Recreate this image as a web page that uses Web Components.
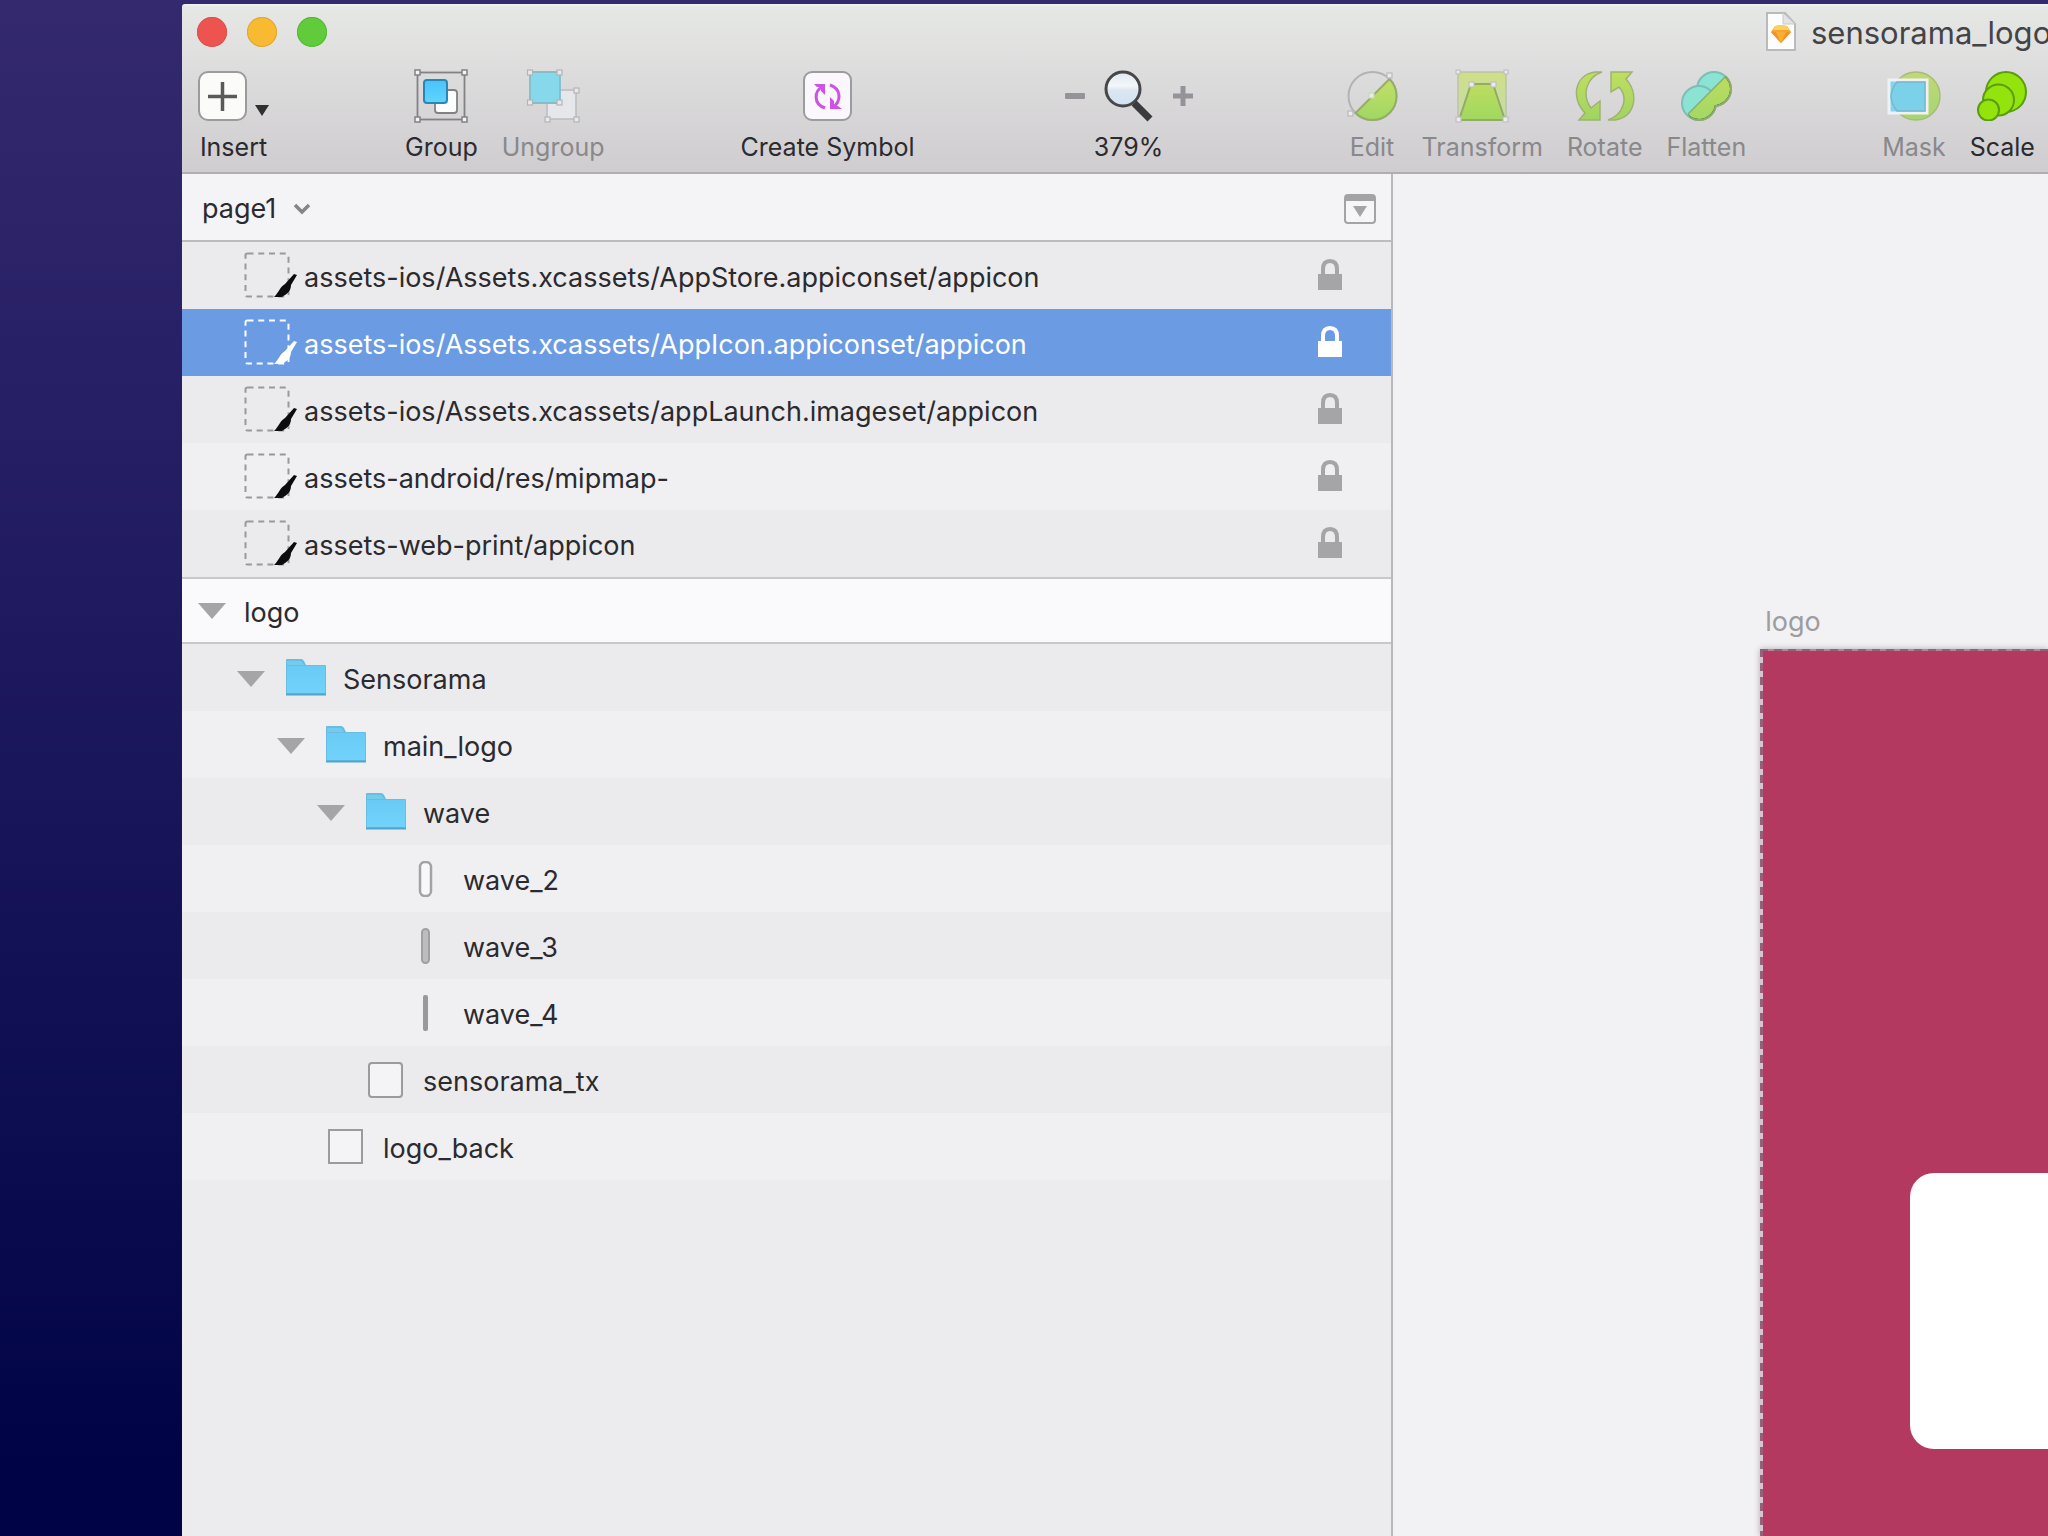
<!DOCTYPE html>
<html lang="en">
<head>
<meta charset="utf-8">
<title>sensorama_logo</title>
<style>
    html, body{
        margin: 0;
        height: 100%;
        overflow: hidden;
    }

    body{
        font-family: Inter, "Liberation Sans", sans-serif;
        font-size: 27px;
        color: #2b2a2e;
        background: linear-gradient(#34296f, #1a165c 50%, #000446 95%);
    }
</style>
</head>
<body>

<sketch-window>
    <title-bar slot="top" name="sensorama_logo"></title-bar>

    <tool-bar slot="top">
        <tool-group>
            <tool-button icon="insert" caret>Insert</tool-button>
        </tool-group>
        <tool-group>
            <tool-button icon="group">Group</tool-button>
            <tool-button icon="ungroup" disabled>Ungroup</tool-button>
        </tool-group>
        <tool-group>
            <tool-button icon="symbol">Create Symbol</tool-button>
        </tool-group>
        <tool-group>
            <zoom-control value="379%"></zoom-control>
        </tool-group>
        <tool-group wide>
            <tool-button icon="edit" disabled>Edit</tool-button>
            <tool-button icon="transform" disabled>Transform</tool-button>
            <tool-button icon="rotate" disabled>Rotate</tool-button>
            <tool-button icon="flatten" disabled>Flatten</tool-button>
        </tool-group>
        <tool-group>
            <tool-button icon="mask" disabled>Mask</tool-button>
            <tool-button icon="scale">Scale</tool-button>
        </tool-group>
    </tool-bar>

    <layer-panel slot="side">
        <page-header>page1</page-header>
        <slice-row>assets-ios/Assets.xcassets/AppStore.appiconset/appicon</slice-row>
        <slice-row selected>assets-ios/Assets.xcassets/AppIcon.appiconset/appicon</slice-row>
        <slice-row>assets-ios/Assets.xcassets/appLaunch.imageset/appicon</slice-row>
        <slice-row light>assets-android/res/mipmap-</slice-row>
        <slice-row>assets-web-print/appicon</slice-row>
        <artboard-header>logo</artboard-header>
        <layer-row depth="0" icon="folder" open>Sensorama</layer-row>
        <layer-row depth="1" icon="folder" open light>main_logo</layer-row>
        <layer-row depth="2" icon="folder" open>wave</layer-row>
        <layer-row depth="3" icon="pill-wide" light>wave_2</layer-row>
        <layer-row depth="3" icon="pill-mid">wave_3</layer-row>
        <layer-row depth="3" icon="pill-thin" light>wave_4</layer-row>
        <layer-row depth="2" icon="round-rect">sensorama_tx</layer-row>
        <layer-row depth="1" icon="rect" light>logo_back</layer-row>
    </layer-panel>

    <art-board slot="canvas">logo</art-board>
</sketch-window>

<script>
/*
    Icons
    every entry: [width, height, svg content]
*/
const ICONS = {
    "insert": [49, 50, `
        <rect x="1" y="1" width="47" height="48" rx="9" fill="#fbfbfa" stroke="#9c9b9c" stroke-width="2"/>
        <path d="M10 25.500H39M24.500 11V40" stroke="#5b5a5b" stroke-width="3.500"/>`],
    "caret": [14, 11, `<path d="M0 0H14L7 11Z" fill="#303030"/>`],
    "group": [54, 54, `
        <g fill="none" stroke="#828184" stroke-width="1.800">
            <rect x="3.500" y="3.500" width="47" height="47"/>
            <rect x="21" y="21" width="22" height="23" rx="3" fill="#fdfdfd"/>
        </g>
        <rect x="10" y="11" width="23" height="23" rx="3" fill="url(#gb)" stroke="#2c86b4" stroke-width="2"/>
        <g fill="#f4f4f4" stroke="#828184" stroke-width="1.500">
            <rect x="1" y="1" width="5" height="5"/><rect x="48" y="1" width="5" height="5"/>
            <rect x="1" y="48" width="5" height="5"/><rect x="48" y="48" width="5" height="5"/>
        </g>
        <defs><linearGradient id="gb" x2="0" y2="1"><stop stop-color="#48c3fb"/><stop offset="1" stop-color="#5fd4fe"/></linearGradient></defs>`],
    "ungroup": [54, 54, `
        <rect x="21" y="21" width="29" height="29" fill="#e6e7ea" stroke="#bcbcbf" stroke-width="1.500"/>
        <rect x="4" y="3" width="30" height="31" rx="2" fill="#85d9eb" stroke="#86bccb" stroke-width="1.800"/>
        <g fill="#e9e9eb" stroke="#b4b4b8" stroke-width="1.200">
            <rect x="1.500" y="1" width="5" height="5"/><rect x="31" y="1" width="5" height="5"/>
            <rect x="1.500" y="31" width="5" height="5"/><rect x="31" y="31" width="5" height="5"/>
            <rect x="48" y="19" width="5" height="5"/><rect x="19" y="48" width="5" height="5"/>
            <rect x="48" y="48" width="5" height="5"/>
        </g>`],
    "symbol": [49, 50, `
        <rect x="1" y="1" width="47" height="48" rx="8" fill="#faf8fc" stroke="#9c9b9e" stroke-width="2"/>
        <g fill="none" stroke="#cf52e6" stroke-width="3">
            <path d="M22 37C10 33 11 20 20 15"/>
            <path d="M27 14C39 18 38 31 30 36"/>
        </g>
        <path d="M11 13H22V24L18 20V16H14Z M27 26V38H39L35 35H31V30Z" fill="#cf52e6"/>`],
    "minus": [20, 6, `<rect y="0" width="20" height="6" rx="1" fill="#959397"/>`],
    "plus": [20, 20, `<path d="M0 10H20M10 0V20" stroke="#959397" stroke-width="5"/>`],
    "lens": [50, 52, `
        <path d="M30 33L46 49" stroke="#3b3b3d" stroke-width="7"/>
        <circle cx="19" cy="19" r="17" fill="url(#ln)" stroke="#474749" stroke-width="3"/>
        <defs><linearGradient id="ln" x2="0" y2="1"><stop stop-color="#dfe9f2"/><stop offset=".4" stop-color="#f3f6f9"/><stop offset=".55" stop-color="#dbe6f0"/><stop offset="1" stop-color="#cfe3f7"/></linearGradient></defs>`],
    "edit": [51, 50, `
        <defs><linearGradient id="ed" x2="0" y2="1"><stop stop-color="#c3e067"/><stop offset="1" stop-color="#9fd763"/></linearGradient></defs>
        <circle cx="25.500" cy="25" r="24" fill="none" stroke="#b3b3b6" stroke-width="2"/>
        <path d="M42.500 8L8.500 42A24 24 0 0 0 42.500 8Z" fill="url(#ed)" stroke="#96ad67" stroke-width="2"/>
        <g fill="#ebebed" stroke="#b9b9bc" stroke-width="1.200">
            <rect x="40" y="2" width="5" height="5"/><rect x="22" y="22" width="5" height="5" stroke="#c7dcae"/><rect x="1" y="40" width="5" height="5"/>
        </g>`],
    "transform": [54, 54, `
        <defs>
            <linearGradient id="tr" x2="0" y2="1"><stop stop-color="#bddc60"/><stop offset="1" stop-color="#a0d85f"/></linearGradient>
            <linearGradient id="tb" x2="0" y2="1"><stop stop-color="#cfdf86"/><stop offset="1" stop-color="#c4dcae"/></linearGradient>
        </defs>
        <rect x="3" y="3" width="48" height="48" fill="url(#tb)" stroke="#bcc3a8" stroke-width="1.500"/>
        <path d="M16 15H38L50 51H4Z" fill="url(#tr)" stroke="#94ab68" stroke-width="2"/>
        <g fill="#ececee" stroke="#c0c0c4" stroke-width="1.200">
            <rect x="1" y="1" width="4" height="4"/><rect x="49" y="1" width="4" height="4"/>
            <rect x="1" y="48" width="5" height="5"/><rect x="48" y="48" width="5" height="5"/>
            <rect x="14" y="13" width="5" height="5"/><rect x="36" y="13" width="5" height="5"/>
        </g>`],
    "rotate": [60, 50, `
        <defs><linearGradient id="ro" x2="0" y2="50" gradientUnits="userSpaceOnUse"><stop stop-color="#c0df5e"/><stop offset="1" stop-color="#9fd462"/></linearGradient></defs>
        <g fill="url(#ro)" stroke="#a0b273" stroke-width="1.500">
            <path d="M27 1C12 6 6 23 16 37L25 30V49H4L10 42C-4 28 -1 4 20 1Z"/>
            <path d="M33 49C48 44 54 27 44 16L36 21V1H57L51 8C64 22 61 46 40 49Z"/>
        </g>`],
    "flatten": [51, 50, `
        <defs>
            <linearGradient id="fl" x2="0" y2="50" gradientUnits="userSpaceOnUse"><stop stop-color="#bfdd5e"/><stop offset="1" stop-color="#a2d865"/></linearGradient>
            <clipPath id="fc"><path d="M45 5L7 43L20 60H60V5Z"/></clipPath>
        </defs>
        <g fill="#8be3d3" stroke="#7cbfb5" stroke-width="2">
            <circle cx="33" cy="18" r="17"/><circle cx="18" cy="32" r="17"/>
        </g>
        <g clip-path="url(#fc)">
            <g stroke="#8fab68" stroke-width="2"><circle cx="33" cy="18" r="17"/><circle cx="18" cy="32" r="17"/></g>
            <g fill="url(#fl)"><circle cx="33" cy="18" r="16"/><circle cx="18" cy="32" r="16"/></g>
        </g>
        <path d="M44 6L7 43" stroke="#83ad79" stroke-width="1.500"/>`],
    "mask": [54, 50, `
        <defs><linearGradient id="mk" x2="0" y2="1"><stop stop-color="#c2d876"/><stop offset="1" stop-color="#a5d573"/></linearGradient></defs>
        <circle cx="29" cy="25" r="24" fill="url(#mk)" stroke="#a5bd78" stroke-width="1.500"/>
        <rect x="2" y="9" width="38" height="33" fill="#83d6ea" stroke="#f1f1f5" stroke-width="3"/>
        <path d="M4 25A25 25 0 0 1 10 11H38V40H10A25 25 0 0 1 4 25Z" fill="#7bd0ea" stroke="#78b7cb" stroke-width="1.500"/>`],
    "scale": [50, 50, `
        <g fill="#93e30c" stroke="#5b9d0c" stroke-width="2">
            <circle cx="29" cy="21" r="20"/><circle cx="21.500" cy="29" r="15.500"/><circle cx="11.500" cy="39" r="10.500"/>
        </g>`],
    "document": [30, 40, `
        <path d="M1 1H19L29 12V38H1Z" fill="#fdfdfd" stroke="#b9babb" stroke-width="2"/>
        <path d="M17 1V12H29Z" fill="#e4e4e4" stroke="#c9c9c9"/>
        <path d="M9 14L15 13L21 14L25 20L15 31L5 20Z" fill="#f7a42c"/>
        <path d="M9 14L15 13L21 14L23 18H7Z" fill="#fbd05e"/>
        <path d="M5 20H25L15 31Z" fill="#f1932a"/><path d="M10 20H20L15 31Z" fill="#f9ae35"/>`],
    "chevron": [18, 12, `<path d="M2 2L9 9L16 2" fill="none" stroke="#858487" stroke-width="3.500"/>`],
    "panel": [32, 30, `
        <rect x="1" y="1" width="30" height="28" rx="3" fill="#f6f5f8" stroke="#a3a2a5" stroke-width="2"/>
        <path d="M1 3Q1 1 3 1H29Q31 1 31 3V7H1Z" fill="#a3a2a5"/>
        <path d="M9 12H23L16 23Z" fill="#a3a2a5"/>`],
    "slice": [54, 46, `
        <rect x="2.500" y="1.500" width="43" height="43" rx="2" fill="none" stroke="var(--dash, #99989c)" stroke-width="2" stroke-dasharray="6 4.750"/>
        <path d="M31 45C36 40 37 35 42 32L51 22L54 23L48 33C48 39 44 42 39 45Z" fill="var(--pen, #0c0c0c)"/>`],
    "lock": [24, 31, `
        <path d="M5 17V10Q5 2 12 2T19 10V17" fill="none" stroke="currentColor" stroke-width="4"/>
        <rect x="0" y="15" width="24" height="16" fill="currentColor"/>`],
    "triangle": [28, 16, `<path d="M0 0H28L14 16Z" fill="#a5a4a7"/>`],
    "folder": [40, 37, `
        <defs><linearGradient id="fo" x2="0" y2="1"><stop stop-color="#69cbf5"/><stop offset="1" stop-color="#72d2fb"/></linearGradient></defs>
        <path d="M0 1Q0 0 1 0H15Q17 0 18 2L20 6H39Q40 6 40 7V35H0Z" fill="#68bde2"/>
        <path d="M1 7H39V34H1Z" fill="url(#fo)"/>
        <path d="M1 2H15L18 6H1Z" fill="#74cbec"/>
        <path d="M0 35.500H40" stroke="#4fa5cb" stroke-width="2"/>`],
    "pill-wide": [40, 36, `<rect x="14" y="1" width="11" height="34" rx="5" fill="#f8f8fa" stroke="#a3a2a5" stroke-width="2.500"/>`],
    "pill-mid": [40, 36, `<rect x="16" y="1" width="7" height="34" rx="3.500" fill="#bdbcbf" stroke="#a19fa3" stroke-width="2"/>`],
    "pill-thin": [40, 36, `<rect x="17" y="0" width="5" height="36" rx="2" fill="#99989b"/>`],
    "round-rect": [40, 36, `<rect x="3" y="1" width="33" height="34" rx="3" fill="#f4f3f6" stroke="#9b9a9d" stroke-width="2"/>`],
    "rect": [40, 36, `<rect x="3" y="1" width="33" height="33" fill="#f4f3f6" stroke="#9b9a9d" stroke-width="2"/>`]
}

function icon(name){
    const [w, h, body] = ICONS[name]
    return `<svg width="${w}" height="${h}" viewBox="0 0 ${w} ${h}" aria-hidden="true">${body}</svg>`
}

// reset shared by all the components that hold controls
const BASE = `
    svg{
        display: block;
        flex: none;
    }

    button, select{
        appearance: none;
        margin: 0;
        padding: 0;
        border: 0;
        background: none;
        font: inherit;
        color: inherit;
    }
`

class SketchWindow extends HTMLElement{
    constructor(){
        super()
        this.attachShadow({mode:"open"})
    }

    connectedCallback(){
        this.shadowRoot.innerHTML = `
            <style>
                :host{
                    display: flex;
                    flex-direction: column;
                    box-sizing: border-box;
                    height: 100%;
                    padding: 4px 0 0 182px;
                }

                header{
                    box-sizing: border-box;
                    height: 170px;
                    overflow: hidden;
                    border-top: 2px solid #eeeef3;
                    border-bottom: 2px solid #b0aeb1;
                    border-radius: 3px 0 0 0;
                    background: linear-gradient(#e6e8e5, #dcdbdc 45%, #cfcdcf);
                }

                main{
                    display: grid;
                    grid-template-columns: minmax(0, 37fr) minmax(0, 20fr);
                    flex: 1;
                    min-height: 0;
                }
            </style>
            <header><slot name="top"></slot></header>
            <main>
                <slot name="side"></slot>
                <slot name="canvas"></slot>
            </main>
        `
    }
}

customElements.define("sketch-window", SketchWindow)

class TitleBar extends HTMLElement{
    constructor(){
        super()
        this.attachShadow({mode:"open"})
    }

    connectedCallback(){
        this.shadowRoot.innerHTML = `
            <style>
                ${BASE}
                :host{
                    display: flex;
                    justify-content: space-between;
                    height: 52px;
                    padding-left: 15px;
                    font-size: 31px;
                    color: #444346;
                }

                .lights{
                    display: flex;
                    align-items: center;
                    gap: 20px;
                }

                .lights button{
                    width: 30px;
                    height: 30px;
                    border-radius: 50%;
                }

                .close{ background: #ee544f; box-shadow: inset 0 0 0 1px #d9534f; }
                .min{ background: #f7ba31; box-shadow: inset 0 0 0 1px #dda63a; }
                .max{ background: #60cb3b; box-shadow: inset 0 0 0 1px #58b53a; }

                .name{
                    display: flex;
                    align-items: center;
                    gap: 15px;
                    width: 282px;
                    white-space: nowrap;
                }
            </style>
            <div class="lights">
                <button class="close" aria-label="Close"></button>
                <button class="min" aria-label="Minimize"></button>
                <button class="max" aria-label="Zoom"></button>
            </div>
            <div class="name">${icon("document")}<span>${this.getAttribute("name")}</span></div>
        `
    }
}

customElements.define("title-bar", TitleBar)

class ToolBar extends HTMLElement{
    constructor(){
        super()
        this.attachShadow({mode:"open"})
    }

    connectedCallback(){
        this.shadowRoot.innerHTML = `
            <style>
                :host{
                    display: flex;
                    gap: 136px;
                    padding: 9px 16px 0;
                    font-size: 25px;
                }
            </style>
            <slot></slot>
        `
    }
}

customElements.define("tool-bar", ToolBar)

class ToolGroup extends HTMLElement{
    constructor(){
        super()
        this.attachShadow({mode:"open"})
    }

    connectedCallback(){
        this.shadowRoot.innerHTML = `
            <style>
                :host{
                    display: flex;
                    flex: none;
                    gap: 24px;
                }

                :host([wide]){
                    margin-left: 18px;
                }
            </style>
            <slot></slot>
        `
    }
}

customElements.define("tool-group", ToolGroup)

class ToolButton extends HTMLElement{
    constructor(){
        super()
        this.attachShadow({mode:"open"})
    }

    connectedCallback(){
        const caret = this.hasAttribute("caret") ? icon("caret") : ""
        this.shadowRoot.innerHTML = `
            <style>
                ${BASE}
                :host{
                    display: block;
                }

                button{
                    display: flex;
                    flex-direction: column;
                    align-items: center;
                    gap: 6px;
                    line-height: 32px;
                    white-space: nowrap;
                }

                button:disabled{
                    color: #89888b;
                }

                .icon{
                    display: flex;
                    align-items: center;
                    gap: 8px;
                    height: 58px;
                }

                .icon svg + svg{
                    margin-top: 28px;
                }
            </style>
            <button ${this.hasAttribute("disabled") ? "disabled" : ""}>
                <span class="icon">${icon(this.getAttribute("icon"))}${caret}</span>
                <slot></slot>
            </button>
        `
    }
}

customElements.define("tool-button", ToolButton)

class ZoomControl extends HTMLElement{
    constructor(){
        super()
        this.attachShadow({mode:"open"})
    }

    connectedCallback(){
        this.shadowRoot.innerHTML = `
            <style>
                ${BASE}
                :host{
                    display: flex;
                    flex-direction: column;
                    align-items: center;
                    gap: 6px;
                    margin-left: 14px;
                    line-height: 32px;
                }

                div{
                    display: flex;
                    align-items: center;
                    gap: 19px;
                    height: 58px;
                }
            </style>
            <div>
                <button aria-label="Zoom out">${icon("minus")}</button>
                <button aria-label="Actual size">${icon("lens")}</button>
                <button aria-label="Zoom in">${icon("plus")}</button>
            </div>
            <output>${this.getAttribute("value")}</output>
        `
    }
}

customElements.define("zoom-control", ZoomControl)

class LayerPanel extends HTMLElement{
    constructor(){
        super()
        this.attachShadow({mode:"open"})
    }

    connectedCallback(){
        this.shadowRoot.innerHTML = `
            <style>
                :host{
                    display: block;
                    overflow: hidden;
                    border-right: 2px solid #b9b8bb;
                    background: #ecebed;
                }
            </style>
            <slot></slot>
        `
    }
}

customElements.define("layer-panel", LayerPanel)

class PageHeader extends HTMLElement{
    constructor(){
        super()
        this.attachShadow({mode:"open"})
    }

    connectedCallback(){
        this.shadowRoot.innerHTML = `
            <style>
                ${BASE}
                :host{
                    display: flex;
                    align-items: center;
                    justify-content: space-between;
                    height: 62px;
                    padding: 4px 15px 0 20px;
                    border-bottom: 2px solid #bcbbbe;
                    background: #f4f3f6;
                }

                label{
                    display: flex;
                    align-items: center;
                    gap: 16px;
                }

                select{
                    padding-bottom: 2px;
                }
            </style>
            <label>
                <select aria-label="Page"><option>${this.textContent}</option></select>
                ${icon("chevron")}
            </label>
            <button aria-label="Toggle page list">${icon("panel")}</button>
        `
    }
}

customElements.define("page-header", PageHeader)

class SliceRow extends HTMLElement{
    constructor(){
        super()
        this.attachShadow({mode:"open"})
    }

    connectedCallback(){
        this.shadowRoot.innerHTML = `
            <style>
                ${BASE}
                :host{
                    display: flex;
                    align-items: center;
                    height: 65px;
                    padding: 0 49px 2px 61px;
                    white-space: nowrap;
                    background: #ebeaec;
                }

                :host([light]){
                    background: #f0eff2;
                }

                :host([selected]){
                    --dash: #ffffff;
                    --pen: #ffffff;
                    color: #ffffff;
                    background: #6a9be3;
                }

                span{
                    flex: 1;
                    padding: 6px 0 0 7px;
                }

                button{
                    color: #a5a4a7;
                }

                :host([selected]) button{
                    color: #ffffff;
                }
            </style>
            ${icon("slice")}
            <span><slot></slot></span>
            <button aria-label="Lock">${icon("lock")}</button>
        `
    }
}

customElements.define("slice-row", SliceRow)

class ArtboardHeader extends HTMLElement{
    constructor(){
        super()
        this.attachShadow({mode:"open"})
    }

    connectedCallback(){
        this.shadowRoot.innerHTML = `
            <style>
                ${BASE}
                :host{
                    display: flex;
                    align-items: center;
                    gap: 18px;
                    height: 63px;
                    padding-left: 16px;
                    border-top: 2px solid #c8c7ca;
                    border-bottom: 2px solid #c8c7ca;
                    background: #faf9fc;
                }

                span{
                    padding-top: 4px;
                }
            </style>
            <button aria-label="Collapse">${icon("triangle")}</button>
            <span><slot></slot></span>
        `
    }
}

customElements.define("artboard-header", ArtboardHeader)

class LayerRow extends HTMLElement{
    constructor(){
        super()
        this.attachShadow({mode:"open"})
    }

    connectedCallback(){
        const indent = 55 + Number(this.getAttribute("depth")) * 40
        const toggle = this.hasAttribute("open")
            ? `<button aria-label="Collapse">${icon("triangle")}</button>`
            : ""
        this.shadowRoot.innerHTML = `
            <style>
                ${BASE}
                :host{
                    display: flex;
                    align-items: center;
                    height: 67px;
                    background: #ebeaec;
                }

                :host([light]){
                    background: #f0eff2;
                }

                .toggle{
                    width: 49px;
                    margin-left: ${indent}px;
                }

                .name{
                    padding: 4px 0 0 17px;
                }
            </style>
            <span class="toggle">${toggle}</span>
            ${icon(this.getAttribute("icon"))}
            <span class="name"><slot></slot></span>
        `
    }
}

customElements.define("layer-row", LayerRow)

class ArtBoard extends HTMLElement{
    constructor(){
        super()
        this.attachShadow({mode:"open"})
    }

    connectedCallback(){
        this.shadowRoot.innerHTML = `
            <style>
                :host{
                    display: flex;
                    flex-direction: column;
                    padding: 432px 0 0 367px;
                    background: #f2f1f4;
                }

                .label{
                    padding: 0 0 11px 5px;
                    line-height: 32px;
                    color: #9d9c9f;
                }

                /* dashed edge on the top and on the left */
                .board{
                    flex: 1;
                    padding: 524px 0 0 150px;
                    background:
                        repeating-linear-gradient(90deg, #94607a 0 8px, #c0809a 8px 14px) 0 0 / 100% 2px no-repeat,
                        repeating-linear-gradient(#94607a 0 8px, #d9c3cf 8px 14px) 0 0 / 3px 100% no-repeat,
                        #b43961;
                    box-shadow: 0 0 6px #aeb0b4;
                }

                .shape{
                    height: 276px;
                    border-radius: 24px 0 0 24px;
                    background: #ffffff;
                }
            </style>
            <div class="label"><slot></slot></div>
            <div class="board"><div class="shape"></div></div>
        `
    }
}

customElements.define("art-board", ArtBoard)
</script>
</body>
</html>
